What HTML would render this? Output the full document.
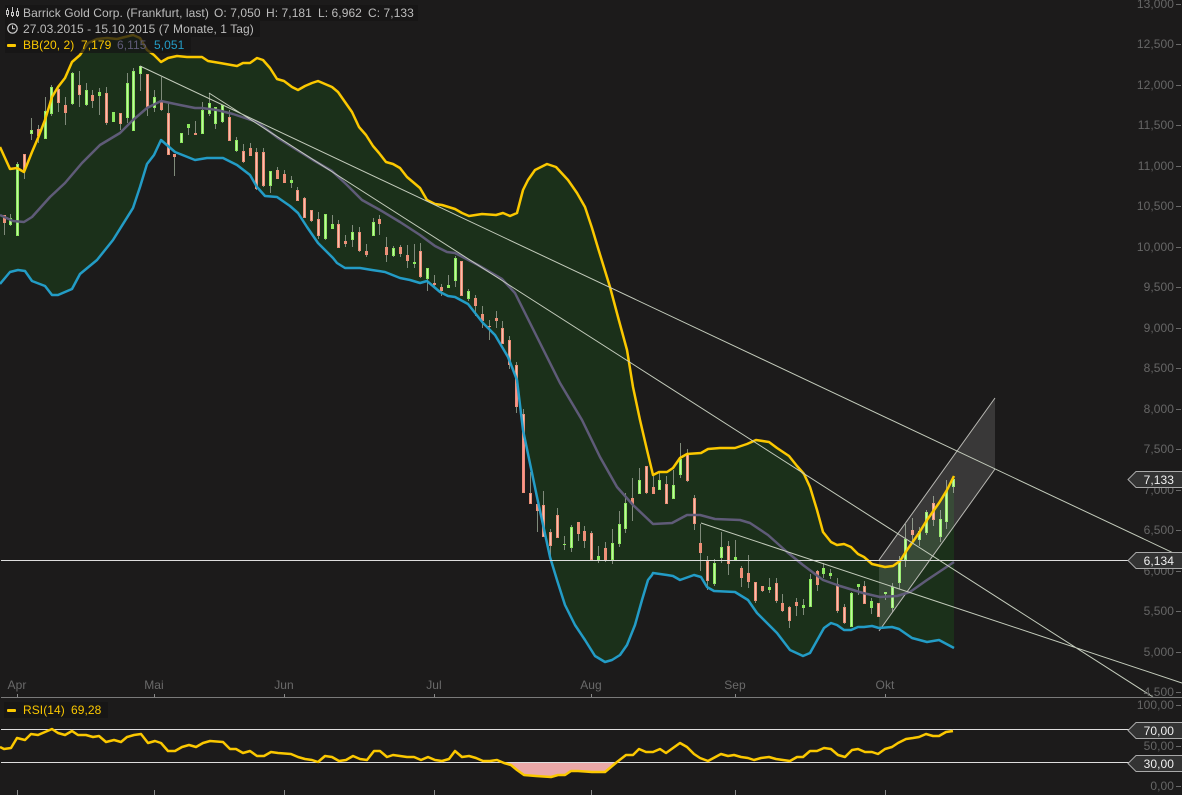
<!DOCTYPE html>
<html lang="de"><head><meta charset="utf-8"><title>Barrick Gold Corp.</title>
<style>html,body{margin:0;padding:0;background:#1c1b1b;width:1182px;height:795px;overflow:hidden}svg{display:block;font-family:"Liberation Sans",sans-serif;font-size:12px;letter-spacing:.07px}</style></head>
<body>
<svg width="1182" height="795" viewBox="0 0 1182 795" xmlns="http://www.w3.org/2000/svg">
<rect width="1182" height="795" fill="#1c1b1b"/>
<!-- BB fill -->
<polygon fill="#1b301a" points="0,147 10,169 17,168 24,172 32,152 38,138 45,120 52,97 58,87 65,78 72,62 80,55 88,43 97,39 107,38 117,39 125,37 133,35 140,38 147,50 154,55 161,62 168,58 177,56 187,57 202,57 208,61 220,63 237,66 243,63 250,63 257,58 263,60 270,68 277,79 284,81 292,87 298,90 305,86 312,83 318,81 325,84 332,87 338,92 345,102 352,112 359,127 366,135 373,146 379,153 386,162 393,164 400,168 407,177 420,188 427,200 435,204 442,205 455,209 462,213 469,216 482,214 496,215 503,213 510,216 517,213 523,190 528,180 535,170 547,164 556,167 568,180 577,193 585,207 592,228 598,248 610,287 618,317 627,350 633,387 640,420 647,450 653,475 659,472 667,472 673,468 680,458 687,454 701,453 708,449 720,448 735,448 747,444 756,440 769,442 777,448 789,456 797,466 804,474 810,487 817,510 823,532 831,542 837,545 844,544 851,547 858,554 864,557 872,564 885,567 893,566 900,561 907,550 919,533 927,520 939,503 947,490 954,476 954,648 939,640 927,642 912,638 899,629 892,627 879,628 872,626 864,627 858,627 851,630 844,630 837,625 831,623 824,628 810,653 803,656 790,650 777,633 757,613 748,600 735,592 714,591 707,587 701,577 694,575 680,580 673,576 667,575 653,573 652,575 648,580 642,600 635,625 627,645 620,655 612,660 605,662 595,656 585,640 575,625 565,605 557,580 550,557 537,497 523,430 517,380 508,357 495,335 483,323 468,304 455,297 448,296 440,292 427,281 420,283 410,280 400,278 385,272 372,270 360,268 345,268 337,263 333,258 318,243 307,227 298,213 290,206 277,197 265,196 257,187 250,175 237,165 223,158 207,158 195,160 175,152 161,140 154,155 147,164 140,187 133,208 113,240 97,260 80,274 72,289 58,295 52,295 45,286 32,281 25,271 18,270 10,272 0,284"/>
<!-- wicks -->
<path fill="none" stroke="#7f8a7a" stroke-width="1" d="M4.5 215V235M10.5 214V226M17.5 162V236M24.5 154V179M31.5 118V140M38.5 125V143M45.5 97V139M51.5 85V116M58.5 85V112M65.5 97V125M72.5 72V105M79.5 71V107M86.5 83V106M92.5 90V108M99.5 88V115M106.5 87V125M113.5 112V122M120.5 113V130M127.5 73V123M133.5 68V131M140.5 66V91M147.5 74V116M154.5 90V112M161.5 77V111M168.5 103V155M174.5 154V176M181.5 133V143M188.5 124V135M195.5 121V135M202.5 102V134M209.5 93V116M215.5 107V129M222.5 105V123M229.5 110V141M236.5 137V152M243.5 144V163M250.5 143V156M256.5 148V190M263.5 148V187M270.5 171V193M277.5 167V179M284.5 170V183M291.5 176V188M297.5 187V201M304.5 197V218M311.5 210V222M318.5 212V239M325.5 214V240M332.5 215V229M338.5 220V248M345.5 235V247M352.5 225V247M359.5 227V252M366.5 244V257M373.5 218V236M379.5 215V235M386.5 237V262M393.5 246V257M400.5 245V257M407.5 245V268M414.5 244V268M420.5 243V278M427.5 268V291M434.5 275V287M441.5 284V296M448.5 275V288M455.5 256V287M461.5 261V296M468.5 289V301M475.5 295V316M482.5 306V328M489.5 320V340M496.5 311V328M502.5 321V344M509.5 336V369M516.5 362V413M523.5 409V493M530.5 472V504M537.5 504V532M543.5 491V537M550.5 529V557M557.5 508V538M564.5 536V550M571.5 525V552M578.5 522V541M584.5 526V548M591.5 531V560M598.5 546V563M605.5 542V562M612.5 529V564M619.5 511V547M625.5 493V533M632.5 478V521M639.5 468V494M646.5 466V494M653.5 475V494M659.5 473V490M666.5 476V504M673.5 470V499M680.5 443V478M687.5 449V482M694.5 495V530M700.5 524V571M707.5 556V590M714.5 559V586M721.5 532V563M728.5 541V575M735.5 540V560M741.5 566V587M748.5 555V588M755.5 582V603M762.5 586V592M769.5 578V593M776.5 578V603M782.5 594V612M789.5 606V628M796.5 598V616M803.5 599V615M810.5 574V607M817.5 570V591M823.5 563V578M830.5 569V579M837.5 578V613M844.5 604V624M851.5 592V627M858.5 584V595M864.5 581V604M871.5 598V614M878.5 603V617M885.5 592V600M892.5 583V612M899.5 556V589M905.5 524V567M912.5 518V543M919.5 527V546M926.5 510V535M933.5 496V526M940.5 510V542M946.5 480V529M953.5 476V493"/>
<!-- green bodies -->
<path fill="none" stroke="#8de85f" stroke-width="3" d="M10.5 218V225M17.5 164V236M31.5 130V134M45.5 111V139M51.5 87V114M72.5 73V104M86.5 90V105M99.5 92V96M113.5 112V122M127.5 83V118M133.5 71V131M140.5 66V74M154.5 97V108M181.5 133V143M188.5 124V128M202.5 110V134M209.5 103V114M215.5 107V124M222.5 105V122M236.5 140V151M270.5 171V186M291.5 180V183M325.5 214V239M332.5 224V229M352.5 232V240M373.5 222V236M393.5 248V256M414.5 262V264M427.5 268V279M448.5 285V288M455.5 258V281M468.5 291V299M564.5 544V545M571.5 527V548M598.5 556V561M612.5 543V560M619.5 524V544M625.5 503V529M639.5 480V494M659.5 480V490M673.5 485V499M680.5 459V475M714.5 563V584M721.5 547V558M735.5 557V560M769.5 587V590M803.5 605V608M810.5 579V607M823.5 568V574M830.5 573V576M851.5 593V627M858.5 584V587M871.5 601V608M885.5 592V594M892.5 587V608M899.5 562V583M905.5 539V560M919.5 531V540M926.5 512V533M940.5 519V537M946.5 491V522M953.5 479V487"/>
<path fill="none" stroke="#c2f7a2" stroke-width="1" d="M10.5 219V224M17.5 165V235M31.5 131V133M45.5 112V138M51.5 88V113M72.5 74V103M86.5 91V104M127.5 84V117M133.5 72V130M140.5 67V73M154.5 98V107M181.5 134V142M202.5 111V133M209.5 104V113M215.5 108V123M222.5 106V121M236.5 141V150M270.5 172V185M325.5 215V238M352.5 233V239M373.5 223V235M393.5 249V255M427.5 269V278M455.5 259V280M468.5 292V298M571.5 528V547M612.5 544V559M619.5 525V543M625.5 504V528M639.5 481V493M659.5 481V489M673.5 486V498M680.5 460V474M714.5 564V583M721.5 548V557M810.5 580V606M851.5 594V626M892.5 588V607M899.5 563V582M905.5 540V559M919.5 532V539M926.5 513V532M940.5 520V536M946.5 492V521M953.5 480V486"/>
<!-- red bodies -->
<path fill="none" stroke="#ec9078" stroke-width="3" d="M4.5 215V223M24.5 154V170M38.5 129V136M58.5 89V103M65.5 105V113M79.5 85V95M92.5 95V101M106.5 93V123M120.5 113V124M147.5 74V107M161.5 102V110M168.5 113V155M174.5 154V157M195.5 133V135M229.5 117V141M243.5 151V162M250.5 148V156M256.5 152V189M263.5 152V186M277.5 170V179M284.5 174V183M297.5 190V201M304.5 198V218M311.5 210V221M318.5 219V236M338.5 224V248M345.5 241V244M359.5 232V251M366.5 251V255M379.5 219V224M386.5 247V255M400.5 247V254M407.5 255V261M420.5 251V277M434.5 283V285M441.5 287V291M461.5 261V296M475.5 298V306M482.5 314V321M489.5 326V327M496.5 318V321M502.5 328V344M509.5 340V365M516.5 365V407M523.5 414V493M530.5 493V504M537.5 504V511M543.5 505V537M550.5 532V546M557.5 515V538M578.5 522V534M584.5 531V541M591.5 533V560M605.5 548V561M632.5 498V505M646.5 466V493M653.5 487V494M666.5 484V504M687.5 454V481M694.5 498V524M700.5 543V553M707.5 561V581M728.5 546V564M741.5 568V578M748.5 573V582M755.5 582V601M762.5 586V591M776.5 583V601M782.5 603V611M789.5 607V621M796.5 602V606M817.5 571V585M837.5 584V611M844.5 607V623M864.5 586V604M878.5 603V617M912.5 530V535M933.5 503V520"/>
<path fill="none" stroke="#f7c0ae" stroke-width="1" d="M24.5 155V169M58.5 90V102M79.5 86V94M106.5 94V122M120.5 114V123M147.5 75V106M168.5 114V154M229.5 118V140M243.5 152V161M256.5 153V188M263.5 153V185M297.5 191V200M304.5 199V217M311.5 211V220M318.5 220V235M338.5 225V247M359.5 233V250M420.5 252V276M461.5 262V295M502.5 329V343M509.5 341V364M516.5 366V406M523.5 415V492M530.5 494V503M543.5 506V536M550.5 533V545M557.5 516V537M591.5 534V559M646.5 467V492M666.5 485V503M687.5 455V480M694.5 499V523M707.5 562V580M728.5 547V563M755.5 583V600M776.5 584V600M789.5 608V620M837.5 585V610M844.5 608V622M864.5 587V603M878.5 604V616M933.5 504V519"/>
<path fill="none" stroke="#ff8f8f" stroke-width="1" d="M516.5 385V406M523.5 440V492"/>
<!-- Channel -->
<polygon points="879,560 995,398 995,469 879,631" fill="#fff" fill-opacity=".13"/>
<path d="M879 560L995 398M879 631L995 469" stroke="#b9b9b4" stroke-width="1" fill="none"/>
<!-- BB lines -->
<polyline fill="none" stroke="#5f5b78" stroke-width="2.5" stroke-linejoin="round" points="0,215 13,221 24,222 32,217 50,197 65,183 82,163 100,145 120,133 133,120 147,108 161,101 180,105 195,108 202,108 217,110 233,114 257,122 278,138 297,150 313,160 332,171 347,185 362,200 380,210 400,222 420,235 435,246 447,252 455,253 478,265 502,279 515,293 537,337 560,383 582,420 600,457 617,487 633,505 653,524 672,523 687,515 700,515 715,519 740,520 750,523 768,535 787,552 803,565 823,580 840,586 863,593 880,597 897,596 910,592 927,580 954,562"/>
<polyline fill="none" stroke="#239cc6" stroke-width="2.5" stroke-linejoin="round" points="0,284 10,272 18,270 25,271 32,281 45,286 52,295 58,295 72,289 80,274 97,260 113,240 133,208 140,187 147,164 154,155 161,140 175,152 195,160 207,158 223,158 237,165 250,175 257,187 265,196 277,197 290,206 298,213 307,227 318,243 333,258 337,263 345,268 360,268 372,270 385,272 400,278 410,280 420,283 427,281 440,292 448,296 455,297 468,304 483,323 495,335 508,357 517,380 523,430 537,497 550,557 557,580 565,605 575,625 585,640 595,656 605,662 612,660 620,655 627,645 635,625 642,600 648,580 652,575 653,573 667,575 673,576 680,580 694,575 701,577 707,587 714,591 735,592 748,600 757,613 777,633 790,650 803,656 810,653 824,628 831,623 837,625 844,630 851,630 858,627 864,627 872,626 879,628 892,627 899,629 912,638 927,642 939,640 954,648"/>
<polyline fill="none" stroke="#fbc800" stroke-width="2.5" stroke-linejoin="round" points="0,147 10,169 17,168 24,172 32,152 38,138 45,120 52,97 58,87 65,78 72,62 80,55 88,43 97,39 107,38 117,39 125,37 133,35 140,38 147,50 154,55 161,62 168,58 177,56 187,57 202,57 208,61 220,63 237,66 243,63 250,63 257,58 263,60 270,68 277,79 284,81 292,87 298,90 305,86 312,83 318,81 325,84 332,87 338,92 345,102 352,112 359,127 366,135 373,146 379,153 386,162 393,164 400,168 407,177 420,188 427,200 435,204 442,205 455,209 462,213 469,216 482,214 496,215 503,213 510,216 517,213 523,190 528,180 535,170 547,164 556,167 568,180 577,193 585,207 592,228 598,248 610,287 618,317 627,350 633,387 640,420 647,450 653,475 659,472 667,472 673,468 680,458 687,454 701,453 708,449 720,448 735,448 747,444 756,440 769,442 777,448 789,456 797,466 804,474 810,487 817,510 823,532 831,542 837,545 844,544 851,547 858,554 864,557 872,564 885,567 893,566 900,561 907,550 919,533 927,520 939,503 947,490 954,476"/>
<!-- Trend lines -->
<path fill="none" stroke="#c4ccbc" stroke-width="1" d="M140 66L1182 557M209 93L1153 697M701 523L1182 683"/>
<path d="M1 560.5H1130" stroke="#dedede" stroke-width="1"/>
<!-- Separators -->
<path d="M1 697.5H1182" stroke="#7a7a7a" stroke-width="1"/>
<!-- Month ticks -->
<path stroke="#8a8a8a" stroke-width="1" d="M17.5 694V697M154.5 694V697M284.5 694V697M434.5 694V697M591.5 694V697M735.5 694V697M885.5 694V697M17.5 790V795M154.5 790V795M284.5 790V795M434.5 790V795M591.5 790V795M735.5 790V795M885.5 790V795"/>
<g fill="#6a6a6a" text-anchor="middle">
<text x="17" y="689">Apr</text><text x="154" y="689">Mai</text><text x="284" y="689">Jun</text><text x="434" y="689">Jul</text><text x="591" y="689">Aug</text><text x="735" y="689">Sep</text><text x="885" y="689">Okt</text>
</g>
<!-- Y axis -->
<g fill="#666" text-anchor="end">
<text x="1174" y="8">13,000</text><text x="1174" y="48">12,500</text><text x="1174" y="89">12,000</text><text x="1174" y="129">11,500</text><text x="1174" y="170">11,000</text><text x="1174" y="210">10,500</text><text x="1174" y="251">10,000</text><text x="1174" y="291">9,500</text><text x="1174" y="332">9,000</text><text x="1174" y="372">8,500</text><text x="1174" y="413">8,000</text><text x="1174" y="453">7,500</text><text x="1174" y="494">7,000</text><text x="1174" y="534">6,500</text><text x="1174" y="575">6,000</text><text x="1174" y="615">5,500</text><text x="1174" y="656">5,000</text><text x="1174" y="696">4,500</text>
<text x="1174" y="709">100,00</text><text x="1174" y="750">50,00</text><text x="1174" y="790">0,00</text>
</g>
<path stroke="#6a6a6a" stroke-width="1" d="M1176 4.5H1181M1176 44.5H1181M1176 85.5H1181M1176 125.5H1181M1176 166.5H1181M1176 206.5H1181M1176 247.5H1181M1176 287.5H1181M1176 328.5H1181M1176 368.5H1181M1176 409.5H1181M1176 449.5H1181M1176 490.5H1181M1176 530.5H1181M1176 571.5H1181M1176 611.5H1181M1176 652.5H1181M1176 692.5H1181M1176 705.5H1181M1176 746.5H1181M1176 786.5H1181"/>
<!-- RSI -->
<path d="M1 729.5H1130M1 762.5H1130" stroke="#dedede" stroke-width="1"/>
<polygon fill="#eaa8a8" points="504,763 511,765 517,770 524,775 536,776 551,777 558,775 565,775 571,771 578,771 592,772 605,772 617,763"/>
<polyline fill="none" stroke="#fbc800" stroke-width="2.5" stroke-linejoin="round" points="0,747 4,749 11,748 17,738 25,740 31,734 38,735 45,732 52,729 58,733 65,735 72,731 78,735 86,735 93,737 99,736 106,742 114,740 121,742 127,737 134,735 141,734 148,743 155,741 161,743 168,751 175,751 182,747 189,745 196,747 203,743 210,741 223,742 230,749 236,749 243,753 250,751 257,756 264,756 271,752 278,753 291,754 298,757 305,759 312,760 318,762 325,756 332,757 339,761 346,760 353,756 360,759 367,760 374,751 380,751 387,757 393,755 407,757 414,757 421,760 428,757 435,760 442,761 449,759 455,751 462,757 469,756 476,758 483,761 490,761 497,760 504,763 511,765 517,770 524,775 536,776 551,777 558,775 565,775 571,771 578,771 592,772 605,772 617,762 626,755 633,755 639,749 646,752 653,752 660,749 666,753 673,748 680,743 687,747 694,754 700,758 708,761 721,754 728,756 734,755 741,757 748,758 754,760 761,758 769,757 776,759 790,761 797,757 803,757 810,751 817,751 824,748 831,749 838,755 845,757 852,750 858,749 865,752 872,752 878,754 885,749 892,747 898,743 906,739 913,738 919,737 926,734 933,736 939,736 946,732 953,731"/>
<!-- Value labels -->
<g fill="#333" stroke="#a9a9a9" stroke-width="1">
<path d="M1182 471.5H1136L1128 479.5L1136 487.5H1182"/>
<path d="M1182 552.5H1136L1128 560.5L1136 568.5H1182"/>
<path d="M1182 722.5H1136L1128 730.5L1136 738.5H1182"/>
<path d="M1182 755.5H1136L1128 763.5L1136 771.5H1182"/>
</g>
<g fill="#f0f0f0" text-anchor="end">
<text x="1174" y="484">7,133</text><text x="1174" y="565">6,134</text><text x="1174" y="735">70,00</text><text x="1174" y="768">30,00</text>
</g>
<!-- Legend -->
<rect x="5" y="5" width="413" height="16" fill="#161616" fill-opacity=".75"/>
<rect x="5" y="21" width="255" height="16" fill="#161616" fill-opacity=".75"/>
<rect x="5" y="37" width="186" height="16" fill="#161616" fill-opacity=".75"/>
<rect x="4" y="702" width="104" height="16" fill="#161616" fill-opacity=".75"/>
<!-- candle icon -->
<path fill="none" stroke="#c8c8c8" stroke-width="1" d="M7.5 8V17M12.5 7V17M17.5 8V17"/>
<path fill="#1c1b1b" stroke="#c8c8c8" stroke-width="1" d="M6.5 10.5h2v4h-2zM11.5 12.5h2v3h-2zM16.5 11.5h2v4h-2z"/>
<!-- clock icon -->
<circle cx="12.5" cy="28.5" r="4.7" fill="none" stroke="#d0d0d0" stroke-width="1.2"/>
<path d="M12.5 25.5V28.8H15" fill="none" stroke="#d0d0d0" stroke-width="1"/>
<rect x="7" y="44" width="9" height="3" rx="1" fill="#fbc800"/>
<rect x="7" y="709" width="9" height="3" rx="1" fill="#fbc800"/>
<g fill="#bdbdbd">
<text x="23" y="17">Barrick Gold Corp. (Frankfurt, last)</text>
<text x="214" y="17">O: 7,050</text><text x="266" y="17">H: 7,181</text><text x="318" y="17">L: 6,962</text><text x="368" y="17">C: 7,133</text>
<text x="23" y="33">27.03.2015 - 15.10.2015 (7 Monate, 1 Tag)</text>
</g>
<text x="23" y="49" fill="#fbc800">BB(20, 2)</text>
<text x="81" y="49" fill="#fbc800">7,179</text>
<text x="117" y="49" fill="#5f5b78">6,115</text>
<text x="154" y="49" fill="#239cc6">5,051</text>
<text x="23" y="714" fill="#fbc800">RSI(14)</text>
<text x="71" y="714" fill="#fbc800">69,28</text>
</svg>
</body></html>
